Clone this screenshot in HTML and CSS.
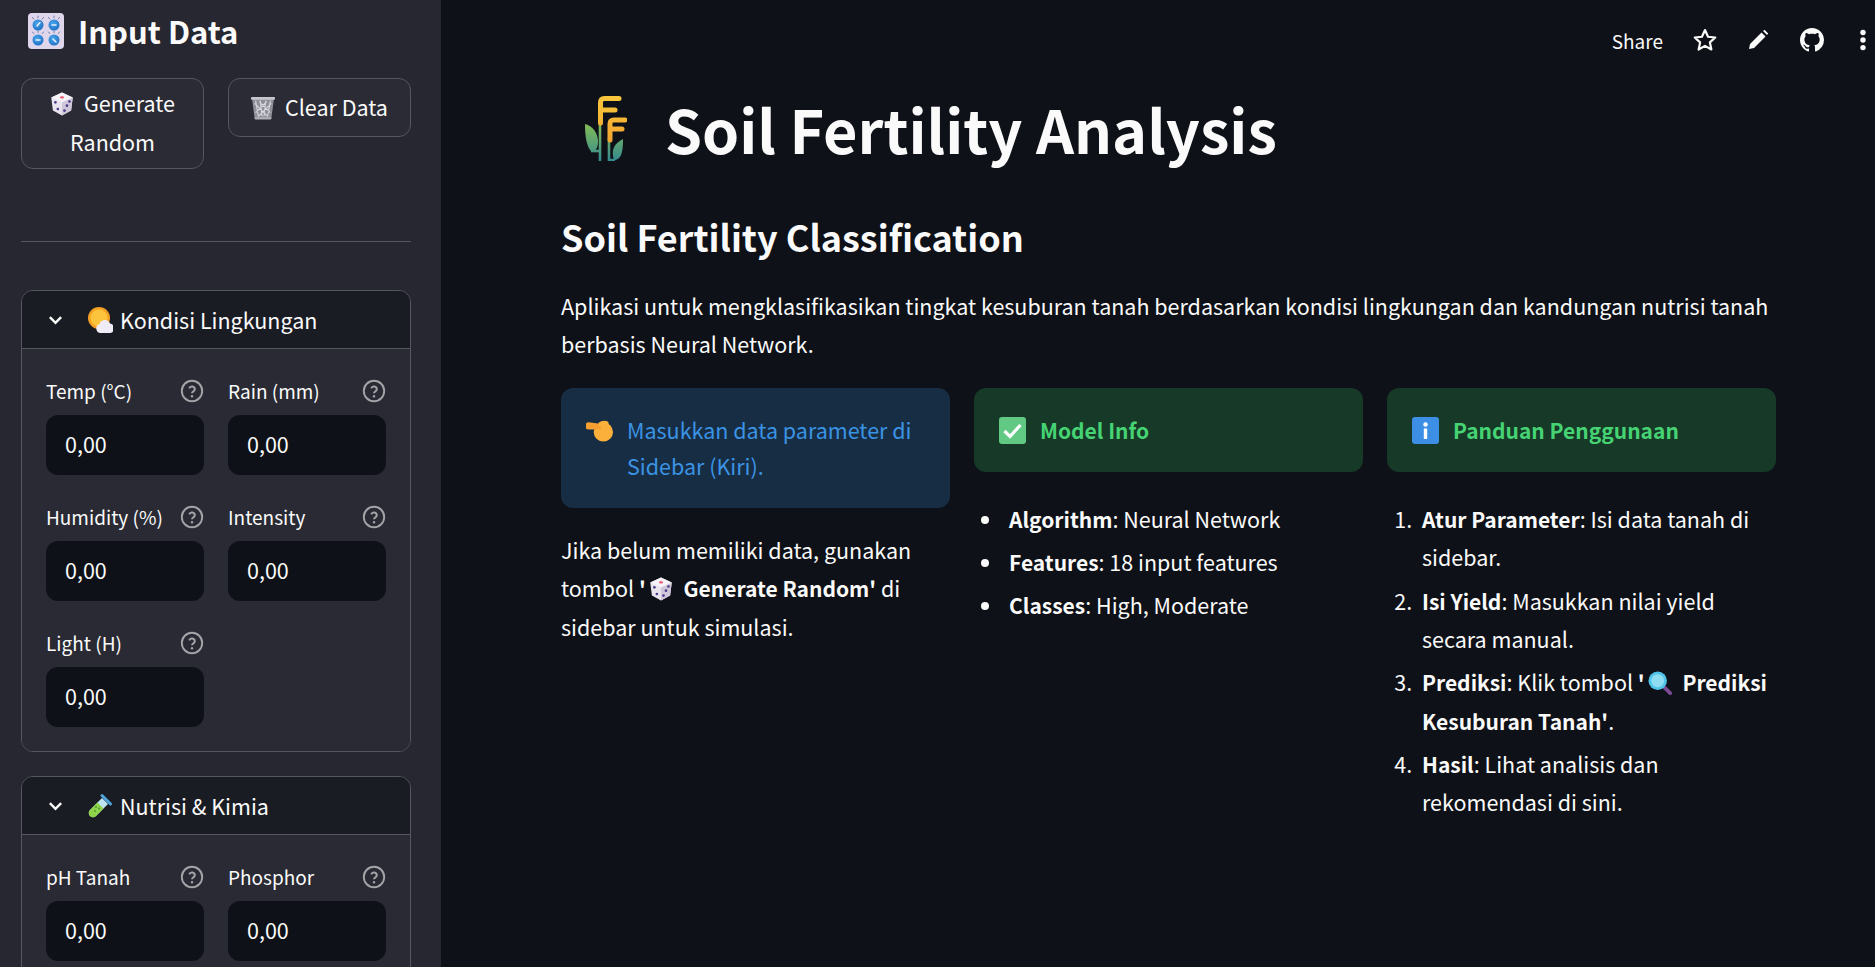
FILE: index.html
```html
<!DOCTYPE html>
<html lang="id">
<head>
<meta charset="utf-8">
<title>Soil Fertility Analysis</title>
<link rel="stylesheet" href="styles.css">
</head>
<body>
<svg class="defs" width="0" height="0" aria-hidden="true">
  <defs>
    <linearGradient id="gold" gradientUnits="userSpaceOnUse" x1="0" y1="0" x2="0" y2="45"><stop offset="0" stop-color="#fbc83c"/><stop offset="1" stop-color="#f0a530"/></linearGradient>
    <linearGradient id="leaf" gradientUnits="userSpaceOnUse" x1="0" y1="26" x2="0" y2="65"><stop offset="0" stop-color="#86bf52"/><stop offset="1" stop-color="#348a90"/></linearGradient>
    <radialGradient id="knob" cx=".4" cy=".35" r=".7"><stop offset="0" stop-color="#4aa6ec"/><stop offset="1" stop-color="#1f6fc4"/></radialGradient>
    <symbol id="e-knobs" viewBox="0 0 36 36">
      <rect x="0" y="0" width="36" height="36" rx="4" fill="#e0d6ec"/>
      <g fill="url(#knob)"><circle cx="10" cy="12" r="5.500"/><circle cx="26" cy="12" r="5.500"/><circle cx="10" cy="27" r="5.500"/><circle cx="26" cy="27" r="5.500"/></g>
      <g stroke="#e8f2fb" stroke-width="1.500" stroke-linecap="round"><path d="M9 13l3-3.500"/><path d="M24 12h4"/><path d="M8 27h4"/><path d="M25 26l3 3"/></g>
      <g stroke="#6f7fa6" stroke-width="1" stroke-linecap="round"><path d="M10 3v1.800M4.500 4.500l1.200 1.500M15.500 4.500l-1.200 1.500M26 3v1.800M20.500 4.500l1.200 1.500M31.500 4.500l-1.200 1.500M10 18v1.500M4.500 19l1.200 1.500M15.500 19l-1.200 1.500M26 18v1.500M20.500 19l1.200 1.500M31.500 19l-1.200 1.500"/></g>
    </symbol>
    <symbol id="e-dice" viewBox="2.500 1.500 27 29">
      <path d="M16 2L29 8 27 24 16 30 5 24 3 8z" fill="#e8e3ee"/>
      <path d="M16 14L29 8 27 24 16 30z" fill="#cfc6da"/>
      <path d="M16 2L29 8 16 14 3 8z" fill="#f6f3f8"/>
      <ellipse cx="16" cy="8" rx="2.400" ry="1.400" fill="#e8506a"/>
      <g fill="#4a3a8c"><circle cx="8" cy="14" r="1.600"/><circle cx="11" cy="22" r="1.600"/><circle cx="25" cy="13" r="1.600"/><circle cx="22" cy="18" r="1.600"/><circle cx="19" cy="24" r="1.600"/></g>
    </symbol>
    <symbol id="e-trash" viewBox="0 0 26 26">
      <path d="M1 2h24l-3 23H4z" fill="#8f8f99"/>
      <path d="M5 5l3 17M10 5l2 17M16 5l-2 17M21 5l-3 17M4 8l14 14M9 6l12 12M22 8L8 22M17 6L5 18" stroke="#d8d8de" stroke-width="1.100" fill="none"/>
      <rect x="0" y="1" width="26" height="3" rx="1" fill="#c6c6ce"/>
      <rect x="4" y="23" width="18" height="2.500" rx="1" fill="#b0b0b8"/>
    </symbol>
    <symbol id="e-sun" viewBox="0 0 26 26">
      <circle cx="12" cy="11" r="11" fill="#f3a024"/>
      <circle cx="12" cy="11" r="8.500" fill="#fcc43d"/>
      <path d="M14 26a4.500 4.500 0 0 1-1.500-8.800 5.500 5.500 0 0 1 10.500-.8A4.800 4.800 0 0 1 22 26z" fill="#efebf7"/>
    </symbol>
    <symbol id="e-tube" viewBox="0 0 26 26">
      <path d="M15 5l6 6L9 23a4.200 4.200 0 0 1-6-6z" fill="#bfe4f2"/>
      <path d="M10.500 9.500l6 6L9 23a4.200 4.200 0 0 1-6-6z" fill="#8fd34a"/>
      <path d="M15 2.500l8.500 8.500" stroke="#4ea6dc" stroke-width="3" stroke-linecap="round"/>
      <g fill="#4e9a34"><circle cx="9" cy="14" r="1"/><circle cx="12" cy="15.500" r="1"/><circle cx="8" cy="18" r="1"/></g>
    </symbol>
    <symbol id="e-sheaf" viewBox="0 0 42 65">
      <g fill="none" stroke="url(#leaf)" stroke-width="2.600">
        <path d="M15 26V65"/><path d="M24 42V64h6"/>
        <path d="M6 55h9"/>
      </g>
      <path d="M0 28c8 2 13 9 13 18 0 5-2 9-6 10C2 52 0 42 0 28z" fill="url(#leaf)"/>
      <path d="M38 43c0 11-1 21-9 21-2-6-3-15 9-21z" fill="url(#leaf)"/>
      <g fill="none" stroke="url(#gold)" stroke-width="5" stroke-linecap="round" stroke-linejoin="round">
        <path d="M15.500 27V7c0-3 1-4.500 4-4.500H34"/><path d="M17 14H30"/>
        <path d="M25 44V28c0-3 1-4 4-4h11"/><path d="M27 33H37"/>
      </g>
    </symbol>
    <symbol id="e-point" viewBox="0 0 28 26">
      <circle cx="18" cy="14.500" r="10" fill="#fbb03b"/>
      <path d="M3 4.500l11 1.500c2 .300 2.500 5.500 0 6H3a3.700 3.700 0 0 1 0-7.500z" fill="#f79f30"/>
      <path d="M13 5c3-2.500 7-3 10-1l1 4H13z" fill="#fbb03b"/>
    </symbol>
    <symbol id="e-check" viewBox="0 0 27 27">
      <rect width="27" height="27" rx="3" fill="#62c985"/>
      <path d="M5.500 14l5.500 5.500L21.500 8" fill="none" stroke="#fff" stroke-width="3.200"/>
    </symbol>
    <symbol id="e-info" viewBox="0 0 27 27">
      <rect width="27" height="27" rx="3" fill="#3d8fe6"/>
      <circle cx="13.500" cy="7.500" r="2.200" fill="#fff"/>
      <rect x="11.800" y="11.500" width="3.400" height="10.500" fill="#fff"/>
    </symbol>
    <symbol id="e-glass" viewBox="0 0 26 26">
      <path d="M15 15l9 9" stroke="#7b4a94" stroke-width="4" stroke-linecap="round"/>
      <circle cx="10.500" cy="10.500" r="10" fill="#4fc3e8"/>
      <circle cx="10.500" cy="10.500" r="7" fill="#8fdcf2"/>
    </symbol>
    <symbol id="i-help" viewBox="0 0 24 24">
      <circle cx="12" cy="12" r="10.200" fill="none" stroke="currentColor" stroke-width="1.900"/>
      <path d="M9.200 9.300a2.900 2.900 0 0 1 5.600 1c0 1.900-2.800 2.400-2.800 3.900" fill="none" stroke="currentColor" stroke-width="2"/>
      <circle cx="12" cy="17.300" r="1.200" fill="currentColor"/>
    </symbol>
    <symbol id="i-chev" viewBox="0 0 16 10">
      <path d="M2 2l6 6 6-6" fill="none" stroke="currentColor" stroke-width="2.600"/>
    </symbol>
  </defs>
</svg>

<div class="app">
  <aside class="sidebar">
    <h2 class="side-title"><svg class="em-36"><use href="#e-knobs"/></svg><span>Input Data</span></h2>
    <div class="btn-row">
      <button class="btn btn-two"><svg class="em-24 btn-em"><use href="#e-dice"/></svg>Generate Random</button>
      <button class="btn"><svg class="em-24 btn-em"><use href="#e-trash"/></svg>Clear Data</button>
    </div>
    <hr class="rule">

    <section class="exp">
      <header class="exp-head"><svg class="chev"><use href="#i-chev"/></svg><svg class="em-26"><use href="#e-sun"/></svg><span>Kondisi Lingkungan</span></header>
      <div class="exp-body">
        <div class="field"><div class="lab"><span>Temp (°C)</span><svg class="help"><use href="#i-help"/></svg></div><div class="inp">0,00</div></div>
        <div class="field"><div class="lab"><span>Rain (mm)</span><svg class="help"><use href="#i-help"/></svg></div><div class="inp">0,00</div></div>
        <div class="field"><div class="lab"><span>Humidity (%)</span><svg class="help"><use href="#i-help"/></svg></div><div class="inp">0,00</div></div>
        <div class="field"><div class="lab"><span>Intensity</span><svg class="help"><use href="#i-help"/></svg></div><div class="inp">0,00</div></div>
        <div class="field"><div class="lab"><span>Light (H)</span><svg class="help"><use href="#i-help"/></svg></div><div class="inp">0,00</div></div>
      </div>
    </section>

    <section class="exp">
      <header class="exp-head"><svg class="chev"><use href="#i-chev"/></svg><svg class="em-26"><use href="#e-tube"/></svg><span>Nutrisi &amp; Kimia</span></header>
      <div class="exp-body">
        <div class="field"><div class="lab"><span>pH Tanah</span><svg class="help"><use href="#i-help"/></svg></div><div class="inp">0,00</div></div>
        <div class="field"><div class="lab"><span>Phosphor</span><svg class="help"><use href="#i-help"/></svg></div><div class="inp">0,00</div></div>
      </div>
    </section>
  </aside>

  <main class="main">
    <nav class="toolbar">
      <span class="share">Share</span>
      <svg class="tool star" viewBox="0 0 24 24"><path d="M12 2.800l2.800 6.200 6.700.700-5 4.500 1.400 6.600L12 17.400l-5.900 3.400 1.400-6.600-5-4.500 6.700-.700z" fill="none" stroke="currentColor" stroke-width="2" stroke-linejoin="round"/></svg>
      <svg class="tool pencil" viewBox="0 0 24 24"><path d="M3 21l1-5L15.500 4.500l4 4L8 20zM17 3l1.500-1.200 3.700 3.700L21 7z" fill="currentColor"/></svg>
      <svg class="tool gh" viewBox="0 0 16 16"><path fill="currentColor" d="M8 0C3.580 0 0 3.580 0 8c0 3.540 2.290 6.530 5.470 7.590.4.070.55-.17.55-.38 0-.19-.01-.82-.01-1.490-2.010.37-2.530-.49-2.690-.94-.09-.23-.48-.94-.82-1.130-.28-.15-.68-.52-.01-.53.63-.01 1.080.58 1.230.82.720 1.210 1.870.87 2.330.66.070-.52.280-.87.510-1.070-1.780-.2-3.640-.89-3.640-3.950 0-.87.310-1.590.820-2.150-.08-.2-.36-1.020.08-2.120 0 0 .67-.21 2.200.82.640-.18 1.320-.27 2-.27s1.360.09 2 .27c1.530-1.040 2.200-.82 2.200-.82.440 1.100.16 1.920.08 2.120.51.560.82 1.270.82 2.150 0 3.070-1.870 3.750-3.650 3.950.29.250.54.730.54 1.480 0 1.070-.01 1.930-.01 2.200 0 .21.150.46.550.38A8.010 8.010 0 0 0 16 8c0-4.420-3.580-8-8-8z"/></svg>
      <svg class="tool dots" viewBox="0 0 6 24"><circle cx="3" cy="5" r="2.500" fill="currentColor"/><circle cx="3" cy="12" r="2.500" fill="currentColor"/><circle cx="3" cy="19" r="2.500" fill="currentColor"/></svg>
    </nav>

    <div class="content">
      <h1 class="title"><svg class="sheaf"><use href="#e-sheaf"/></svg><span>Soil Fertility Analysis</span></h1>
      <h2 class="sub">Soil Fertility Classification</h2>
      <p class="lead">Aplikasi untuk mengklasifikasikan tingkat kesuburan tanah berdasarkan kondisi lingkungan dan kandungan nutrisi tanah berbasis Neural Network.</p>

      <div class="cols">
        <div class="col">
          <div class="alert info"><svg class="em-27"><use href="#e-point"/></svg><span>Masukkan data parameter di Sidebar (Kiri).</span></div>
          <p class="col-text">Jika belum memiliki data, gunakan tombol <b>'<svg class="em-inline"><use href="#e-dice"/></svg> Generate Random'</b> di sidebar untuk simulasi.</p>
        </div>
        <div class="col">
          <div class="alert ok"><svg class="em-27"><use href="#e-check"/></svg><b>Model Info</b></div>
          <ul class="list">
            <li><b>Algorithm</b>: Neural Network</li>
            <li><b>Features</b>: 18 input features</li>
            <li><b>Classes</b>: High, Moderate</li>
          </ul>
        </div>
        <div class="col">
          <div class="alert ok"><svg class="em-27"><use href="#e-info"/></svg><b>Panduan Penggunaan</b></div>
          <ol class="list">
            <li><b>Atur Parameter</b>: Isi data tanah di sidebar.</li>
            <li><b>Isi Yield</b>: Masukkan nilai yield secara manual.</li>
            <li><b>Prediksi</b>: Klik tombol <b>'<svg class="em-inline"><use href="#e-glass"/></svg> Prediksi Kesuburan Tanah'</b>.</li>
            <li><b>Hasil</b>: Lihat analisis dan rekomendasi di sini.</li>
          </ol>
        </div>
      </div>
    </div>
  </main>
</div>
</body>
</html>
```
FILE: styles.css
```css
* { box-sizing: border-box; }
html, body { margin: 0; height: 100%; overflow: hidden; }
body {
  background: #0e1117;
  color: #fafafa;
  font-family: "Noto Sans CJK SC", "Noto Sans", sans-serif;
  font-size: 21.500px;
}
.defs { position: absolute; }
svg { display: block; flex: none; }

.app { display: flex; height: 967px; }

/* Sidebar */
.sidebar {
  width: 441px;
  flex: none;
  height: 967px;
  overflow: hidden;
  background: #262730;
  padding: 13px 30px 0 21px;
}
.side-title {
  display: flex;
  align-items: center;
  gap: 14px;
  margin: 0 0 29px 7px;
  height: 36px;
  font-size: 31px;
  font-weight: 600;
  line-height: 36px;
}
.em-36 { width: 36px; height: 36px; }
.btn-row { display: grid; grid-template-columns: 183px 183px; gap: 24px; align-items: start; }
.btn {
  background: #2a2b35;
  border: 1px solid #55565e;
  border-radius: 12px;
  color: #fafafa;
  font: inherit;
  line-height: 38.500px;
  padding: 6px 10px;
  min-height: 59px;
  text-align: center;
}
.btn-two { padding: 5px 10px 7px; }
.btn-em { display: inline-block; vertical-align: -4px; margin-right: 10px; }
.em-24 { width: 24px; height: 24px; }
.rule { margin: 72px 0 48px; border: 0; border-top: 1px solid #55565e; }

.exp { width: 390px; border: 1px solid #55565e; border-radius: 12px; overflow: hidden; margin-bottom: 24px; }
.exp-head {
  display: flex;
  align-items: center;
  height: 58px;
  background: #1a1c24;
  border-bottom: 1px solid #55565e;
  padding-left: 26px;
}
.chev { width: 15px; height: 10px; color: #fafafa; margin-right: 24px; }
.em-26 { width: 26px; height: 26px; margin-right: 7px; }
.exp-body { display: grid; grid-template-columns: 158px 158px; column-gap: 24px; row-gap: 26px; padding: 26px 24px 24px; background: #292a33; }
.lab { display: flex; align-items: center; justify-content: space-between; height: 32px; margin-bottom: 8px; font-size: 19px; }
.lab span { margin-top: -2px; }
.help { width: 24px; height: 24px; color: #a3a3a8; }
.inp {
  height: 60px;
  background: #0e1117;
  border-radius: 12px;
  padding-left: 19px;
  line-height: 58px;
}

/* Main */
.main { flex: 1; min-width: 0; position: relative; }
.toolbar {
  position: absolute;
  top: 24px; right: 0;
  display: flex;
  align-items: center;
  height: 32px;
  color: #fafafa;
}
.share { font-size: 19px; margin-right: 29px; }
.tool { width: 26px; height: 26px; margin-right: 28px; }
.pencil { width: 24px; height: 24px; margin-right: 30px; }
.gh { width: 24px; height: 24px; margin-right: 35px; }
.dots { width: 8px; margin-right: 8px; }

.content { padding: 96px 99px 0 120px; }
.title {
  display: flex;
  align-items: center;
  margin: 0 0 51px;
  height: 65px;
  font-size: 59.400px;
  font-weight: 700;
  line-height: 65px;
}
.sheaf { width: 42px; height: 65px; margin: 0 38px 0 24px; }
.sub { margin: 0 0 27px; font-size: 36px; font-weight: 600; line-height: 48px; }
.lead { margin: 0 0 25px; line-height: 38px; }
.cols { display: grid; grid-template-columns: repeat(3, 389px); column-gap: 24px; }
.alert { display: flex; align-items: flex-start; border-radius: 12px; padding: 24px; line-height: 36px; }
.alert svg { margin: 5px 14px 0 1px; }
.info { background: #172d43; color: #3b93e4; }
.ok { background: #173928; color: #46d373; }
.em-27 { width: 27px; height: 27px; }
.col-text { margin: 23px 0 0; line-height: 38.400px; }
.em-inline { display: inline-block; width: 24px; height: 24px; vertical-align: -4px; margin: 0 6px 0 3px; }
.list { margin: 28px 0 0; padding-left: 30px; }
.list li { line-height: 38.400px; margin-bottom: 4.800px; padding-left: 5px; }
b { font-weight: 600; font-size: 21px; }
```
